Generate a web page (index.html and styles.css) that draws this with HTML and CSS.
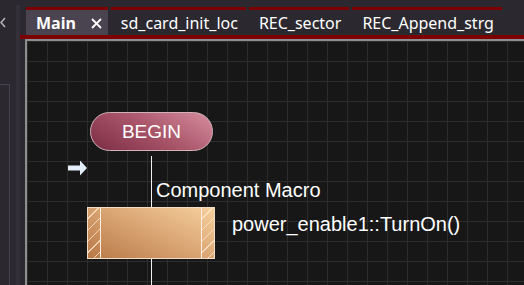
FILE: index.html
```html
<!DOCTYPE html>
<html lang="en">
<head>
    <meta charset="UTF-8">
    <title>Flowchart - Main</title>
    <link rel="stylesheet" href="styles.css">
</head>
<body>
    <div class="app">
        <aside class="sidebar">
            <div class="side-panel">
                <svg class="collapse" width="6" height="11" viewBox="0 0 6 11">
                    <polyline points="5,1 1,5.5 5,10" fill="none" stroke="#b4b1b8" stroke-width="1.6"/>
                </svg>
                <div class="side-box"></div>
            </div>
            <div class="side-stripe"></div>
        </aside>

        <main class="editor">
            <nav class="tabs">
                <div class="tab active">
                    <span class="tab-name">Main</span>
                    <svg class="tab-close" width="11" height="11" viewBox="0 0 11 11">
                        <path d="M1 1 L10 10 M10 1 L1 10" stroke="#fff" stroke-width="1.8"/>
                    </svg>
                </div>
                <div class="tab"><span class="tab-name">sd_card_init_loc</span></div>
                <div class="tab"><span class="tab-name">REC_sector</span></div>
                <div class="tab"><span class="tab-name">REC_Append_strg</span></div>
            </nav>

            <section class="canvas">
                <div class="flow-line"></div>
                <div class="node-begin">BEGIN</div>
                <svg class="start-arrow" width="20" height="16" viewBox="0 0 20 16">
                    <polygon points="0,5.5 12,5.5 12,0.5 19,8 12,15.5 12,10.5 0,10.5" fill="#e4eefa"/>
                </svg>
                <div class="node-label">Component Macro</div>
                <div class="node-macro">
                    <div class="macro-side"></div>
                    <div class="macro-body"></div>
                    <div class="macro-side"></div>
                </div>
                <div class="node-call">power_enable1::TurnOn()</div>
            </section>
        </main>
    </div>
</body>
</html>
```

FILE: styles.css
```css
html, body {
    margin: 0;
    height: 100%;
}
body {
    background-color: #2b2830;
    overflow: hidden;
}
.app {
    display: flex;
    height: 100vh;
}

/* left dock */
.sidebar {
    display: flex;
    width: 20px;
    flex-shrink: 0;
}
.side-panel {
    width: 16px;
    display: flex;
    flex-direction: column;
}
.collapse {
    display: block;
    margin-top: 17px;
}
.side-box {
    margin-top: 56px;
    width: 9px;
    flex: 1;
    border-top: 1px solid #47434d;
    border-right: 1px solid #47434d;
}
.side-stripe {
    width: 4px;
    margin-top: 5px;
    background-color: #34303a;
}

/* tabs */
.editor {
    flex: 1;
    display: flex;
    flex-direction: column;
    min-width: 0;
}
.tabs {
    display: flex;
    gap: 3px;
    padding: 7px 0 0 6px;
    border-bottom: 4px solid #7d0000;
    font-family: "Noto Sans", "Open Sans", sans-serif;
    font-size: 16px;
    color: #fff;
}
.tab {
    display: flex;
    height: 25px;
    padding: 0 8px 0 10px;
    border-top: 3px solid #7d0000;
    white-space: nowrap;
}
.tab-name {
    line-height: 27px;
}
.tab.active {
    background-color: #4a4450;
    padding-right: 6px;
}
.tab.active .tab-name {
    font-weight: bold;
}
.tab-close {
    margin: 8px 0 0 15px;
}

/* flowchart canvas */
.canvas {
    position: relative;
    flex: 1;
    margin-left: 5px;
    border-top: 2px solid #8d8d8d;
    border-left: 2px solid #8d8d8d;
    background-color: #171717;
    background-image:
        linear-gradient(to right, #2d2d2d 1px, transparent 1px),
        linear-gradient(to bottom, #2d2d2d 1px, transparent 1px);
    background-size: 20px 20px;
    font-family: "Liberation Sans", Arial, sans-serif;
    color: #fff;
}
.flow-line {
    position: absolute;
    left: 124px;
    top: 115px;
    bottom: 0;
    width: 1px;
    background-color: #f2f2f2;
}
.node-begin {
    position: absolute;
    left: 63px;
    top: 71px;
    width: 121px;
    height: 37px;
    border: 1px solid #d2b1b9;
    border-radius: 20px;
    background: linear-gradient(30deg, #7b2d43 0%, #a85469 50%, #d68e9e 100%);
    font-size: 19px;
    line-height: 37px;
    text-align: center;
}
.start-arrow {
    position: absolute;
    left: 41px;
    top: 119px;
}
.node-label {
    position: absolute;
    left: 129px;
    top: 138px;
    font-size: 20px;
    line-height: 23px;
}
.node-macro {
    position: absolute;
    left: 60px;
    top: 166px;
    width: 126px;
    height: 50px;
    display: flex;
    border: 1px solid #f2dcc5;
    background: linear-gradient(25deg, #b97948 0%, #d8a472 50%, #f7d09d 100%);
}
.macro-side {
    width: 12px;
    background-image: repeating-linear-gradient(135deg, transparent 0 7px, rgba(255, 235, 210, 0.75) 7px 8px);
}
.macro-body {
    flex: 1;
    border-left: 1px solid #fbeee0;
    border-right: 1px solid #fbeee0;
}
.node-call {
    position: absolute;
    left: 205px;
    top: 172px;
    font-size: 20px;
    line-height: 23px;
}
```
